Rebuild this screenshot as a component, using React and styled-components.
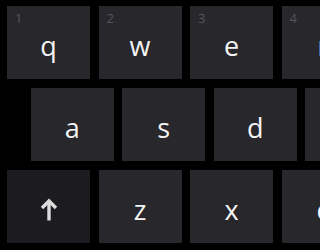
import React from 'react';
import styled, { createGlobalStyle } from 'styled-components';

const Global = createGlobalStyle`
  html, body {
    margin: 0;
    padding: 0;
    background: #000;
    overflow: hidden;
  }
  body {
    width: 320px;
    height: 250px;
  }
`

const Keyboard = styled.div`
  display: flex;
  flex-direction: column;
  gap: 9px;
  padding-top: 6px;
  width: 320px;
  height: 250px;
  overflow: hidden;
  font-family: "Open Sans", "Noto Sans", sans-serif;
`

const Row = styled.div`
  display: flex;
  gap: 8.5px;
  padding-left: ${p => p.$offset}px;
  white-space: nowrap;
`

const Key = styled.div`
  position: relative;
  flex: 0 0 83px;
  height: 73px;
  box-sizing: border-box;
  background: ${p => p.$dark ? '#1c1b20' : '#28272c'};
  display: flex;
  align-items: center;
  justify-content: center;
  padding-top: 6px;
`

const Letter = styled.span`
  color: #f4f4f4;
  font-size: 27px;
  line-height: 1;
`

const Num = styled.span`
  position: absolute;
  top: 6px;
  left: 8px;
  color: #56555b;
  font-size: 13px;
  line-height: 1;
`

const ShiftIcon = () => (
  <svg width="18" height="24" viewBox="0 0 18 24" fill="none">
    <path d="M9 22.5V3" stroke="#dcdcdc" strokeWidth="3.4" />
    <path d="M2 10L9 3L16 10" stroke="#dcdcdc" strokeWidth="3.4" strokeLinejoin="miter" />
  </svg>
)

const rows = [
  { offset: 7, keys: [['q', 1], ['w', 2], ['e', 3], ['r', 4]] },
  { offset: 30.7, keys: [['a'], ['s'], ['d'], ['f']] },
  { offset: 7, keys: [['shift'], ['z'], ['x'], ['c']] },
]

const App = () => {
  return (
    <>
      <Global />
      <Keyboard>
        {rows.map((row, i) => (
          <Row key={i} $offset={row.offset}>
            {row.keys.map(([label, num]) => (
              label === 'shift'
                ? <Key key={label} $dark><ShiftIcon /></Key>
                : (
                  <Key key={label}>
                    {num && <Num>{num}</Num>}
                    <Letter>{label}</Letter>
                  </Key>
                )
            ))}
          </Row>
        ))}
      </Keyboard>
    </>
  );
};

export default App;
